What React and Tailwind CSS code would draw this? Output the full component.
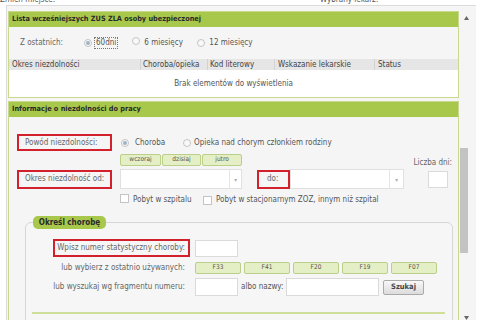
import React from "react";

const Radio = ({ on }) => (
  <span className="inline-flex items-center justify-center w-[8px] h-[8px] rounded-full border border-[#c4c4c4] bg-[#f8f8f8] shrink-0">
    {on && <span className="w-[4px] h-[4px] rounded-full bg-[#9fb3c4]" />}
  </span>
);

const Check = () => (
  <span className="inline-block w-[9px] h-[9px] border border-[#c4c4c4] bg-white shrink-0" />
);

const Select = ({ w, sep }) => (
  <div className={`flex h-[20px] bg-white border border-[#e0e0e0] ${w}`}>
    <div className="flex-1" />
    <div className={`flex items-center justify-center border-l border-[#e6e6e6] ${sep} text-[6px] text-[#aaa]`}>▾</div>
  </div>
);

const GBtn = ({ children, w }) => (
  <div className={`flex items-center justify-center h-[12px] ${w} bg-[#e5efc6] border border-[#bccf8a] rounded-[2px] text-[6.5px] text-[#555]`}>
    {children}
  </div>
);

export default function App() {
  return (
    <div className="w-[480px] h-[320px] overflow-hidden bg-white font-['DejaVu_Sans_Condensed','DejaVu_Sans',sans-serif] text-[8px] text-[#555]">
      <div className="h-[5px] flex text-[#555] text-[8px] leading-[10px]">
        <div className="-mt-[5px] w-[320px]">Zmień miejsce:</div>
        <div className="-mt-[5px]">Wybrany lekarz:</div>
      </div>
      <div className="flex ml-[6px] w-[470px] h-[315px] border-l border-t border-[#dcdcdc] bg-[#f5f5f5]">
        <div className="w-[452px] pt-[5px] pl-[1px]">
          {/* Panel 1 */}
          <div className="w-[451px] border border-[#c8d98e] bg-[#f5f5f5]">
            <div className="h-[15px] bg-[#a8c84c] flex items-center pl-[3px] font-bold text-[#2a2a2a] text-[7.3px]">
              Lista wcześniejszych ZUS ZLA osoby ubezpieczonej
            </div>
            <div className="h-[32px] flex items-center pl-[11px] text-[#666]">
              <span className="w-[64px]">Z ostatnich:</span>
              <Radio on />
              <span className="ml-[2px] px-[1px] border border-dotted border-[#777] text-[#555] leading-[10px]">60dni</span>
              <span className="ml-[14px]"><Radio /></span>
              <span className="ml-[4px] w-[53px] text-[#555]">6 miesięcy</span>
              <Radio />
              <span className="ml-[4px] text-[#555]">12 miesięcy</span>
            </div>
            <div className="h-[11px] flex bg-[#e6e6e6] text-[#444] leading-[11px]">
              <div className="w-[131px] pl-[3px]">Okres niezdolności</div>
              <div className="w-[67px] pl-[2px] border-l border-[#d2d2d2]">Choroba/opieka</div>
              <div className="w-[67px] pl-[2px] border-l border-[#d2d2d2]">Kod literowy</div>
              <div className="w-[100px] pl-[3px] border-l border-[#d2d2d2]">Wskazanie lekarskie</div>
              <div className="flex-1 pl-[3px] border-l border-[#d2d2d2]">Status</div>
            </div>
            <div className="h-[27px] bg-white flex items-center justify-center text-[#555]">
              Brak elementów do wyświetlenia
            </div>
          </div>

          {/* Panel 2 */}
          <div className="mt-[3px] w-[451px] border-t border-l border-r border-[#c8d98e] bg-[#f5f5f5] h-[260px]">
            <div className="h-[15px] bg-[#a8c84c] flex items-center pl-[3px] font-bold text-[#2a2a2a] text-[7.3px]">
              Informacje o niezdolności do pracy
            </div>
            <div className="pt-[17px] pl-[8px]">
              <div className="flex items-center h-[17px]">
                <div className="w-[95px] h-[17px] border-2 border-[#d3202d] flex items-center pl-[6px] text-[#666]">Powód niezdolności:</div>
                <span className="ml-[9px]"><Radio on /></span>
                <span className="ml-[6px] w-[48px] text-[#555]">Choroba</span>
                <Radio />
                <span className="ml-[3px] text-[#555]">Opieka nad chorym członkiem rodziny</span>
              </div>
              <div className="flex items-center h-[11px] mt-[3px]">
                <div className="ml-[103px] flex gap-[1px]">
                  <GBtn w="w-[41px]">wczoraj</GBtn>
                  <GBtn w="w-[39px]">dzisiaj</GBtn>
                  <GBtn w="w-[40px]">jutro</GBtn>
                </div>
                <div className="ml-auto pr-[6px] pt-[6px] text-[#666]">Liczba dni:</div>
              </div>
              <div className="flex items-center h-[20px] mt-[4px]">
                <div className="w-[95px] h-[19px] border-2 border-[#d3202d] flex items-center pl-[6px] text-[#666]">Okres niezdolność od:</div>
                <div className="ml-[8px]"><Select w="w-[122px]" sep="w-[12px]" /></div>
                <div className="ml-[15px] w-[33px] h-[19px] border-2 border-[#d3202d] flex items-center pl-[8px] text-[#666]">do:</div>
                <Select w="w-[114px]" sep="w-[14px]" />
                <div className="ml-[24px] w-[20px] h-[17px] bg-white border border-[#dadada]" />
              </div>
              <div className="flex items-center h-[10px] mt-[6px] text-[#555]">
                <span className="ml-[103px]"><Check /></span>
                <span className="ml-[4px] w-[70px]">Pobyt w szpitalu</span>
                <Check />
                <span className="ml-[4px]">Pobyt w stacjonarnym ZOZ, innym niż szpital</span>
              </div>
            </div>

            {/* Fieldset */}
            <div className="mt-[17px] ml-[16px] w-[428px] h-[150px] border border-[#d6d6d6] rounded-[6px] bg-[#f6f6f6]">
              <div className="-mt-[7px] ml-[7px] w-[73px] h-[13px] rounded-[5px] bg-[#a8c84c] flex items-center justify-center font-bold text-[#2a2a2a] text-[8px]">
                Określ chorobę
              </div>
              <div className="flex items-center h-[18px] mt-[10px]">
                <div className="w-[164px] flex justify-end">
                  <div className="w-[137px] h-[18px] border-2 border-[#d3202d] flex items-center justify-end pr-[3px] text-[#666]">Wpisz numer statystyczny choroby:</div>
                </div>
                <div className="ml-[5px] w-[43px] h-[17px] bg-white border border-[#dadada]" />
              </div>
              <div className="flex items-center h-[12px] mt-[5px]">
                <div className="w-[164px] pr-[5px] text-right text-[#666]">lub wybierz z ostatnio używanych:</div>
                <div className="ml-[5px] flex gap-[3px]">
                  <GBtn w="w-[46px]">F33</GBtn>
                  <GBtn w="w-[46px]">F41</GBtn>
                  <GBtn w="w-[46px]">F20</GBtn>
                  <GBtn w="w-[46px]">F19</GBtn>
                  <GBtn w="w-[46px]">F07</GBtn>
                </div>
              </div>
              <div className="flex items-center h-[18px] mt-[4px]">
                <div className="w-[164px] pr-[5px] text-right text-[#666]">lub wyszukaj wg fragmentu numeru:</div>
                <div className="ml-[5px] w-[43px] h-[18px] bg-white border border-[#dadada]" />
                <span className="ml-[3px] w-[45px] text-[#555]">albo nazwy:</span>
                <div className="w-[93px] h-[18px] bg-white border border-[#dadada]" />
                <div className="ml-[4px] w-[41px] h-[15px] flex items-center justify-center border border-[#aaa] rounded-[2px] bg-gradient-to-b from-[#f8f8f8] to-[#dcdcdc] font-bold text-[#444] text-[7.5px]">Szukaj</div>
              </div>
              <div className="mt-[16px] ml-[6px] w-[413px] h-[2px] bg-[#cfdf9a]" />
            </div>
          </div>
        </div>

        {/* Scrollbar */}
        <div className="w-[17px] flex flex-col">
          <div className="h-[14px] flex items-end pl-[5px]">
            <svg width="5" height="4" viewBox="0 0 5 4"><path d="M2.5 0 L5 4 L0 4 Z" fill="#666" /></svg>
          </div>
          <div className="h-[128px]" />
          <div className="ml-[1px] w-[8px] h-[105px] bg-[#c3c3c3]" />
          <div className="flex-1" />
          <div className="h-[4px] pl-[5px]">
            <svg width="5" height="4" viewBox="0 0 5 4"><path d="M0 0 L5 0 L2.5 4 Z" fill="#666" /></svg>
          </div>
        </div>
      </div>
    </div>
  );
}
